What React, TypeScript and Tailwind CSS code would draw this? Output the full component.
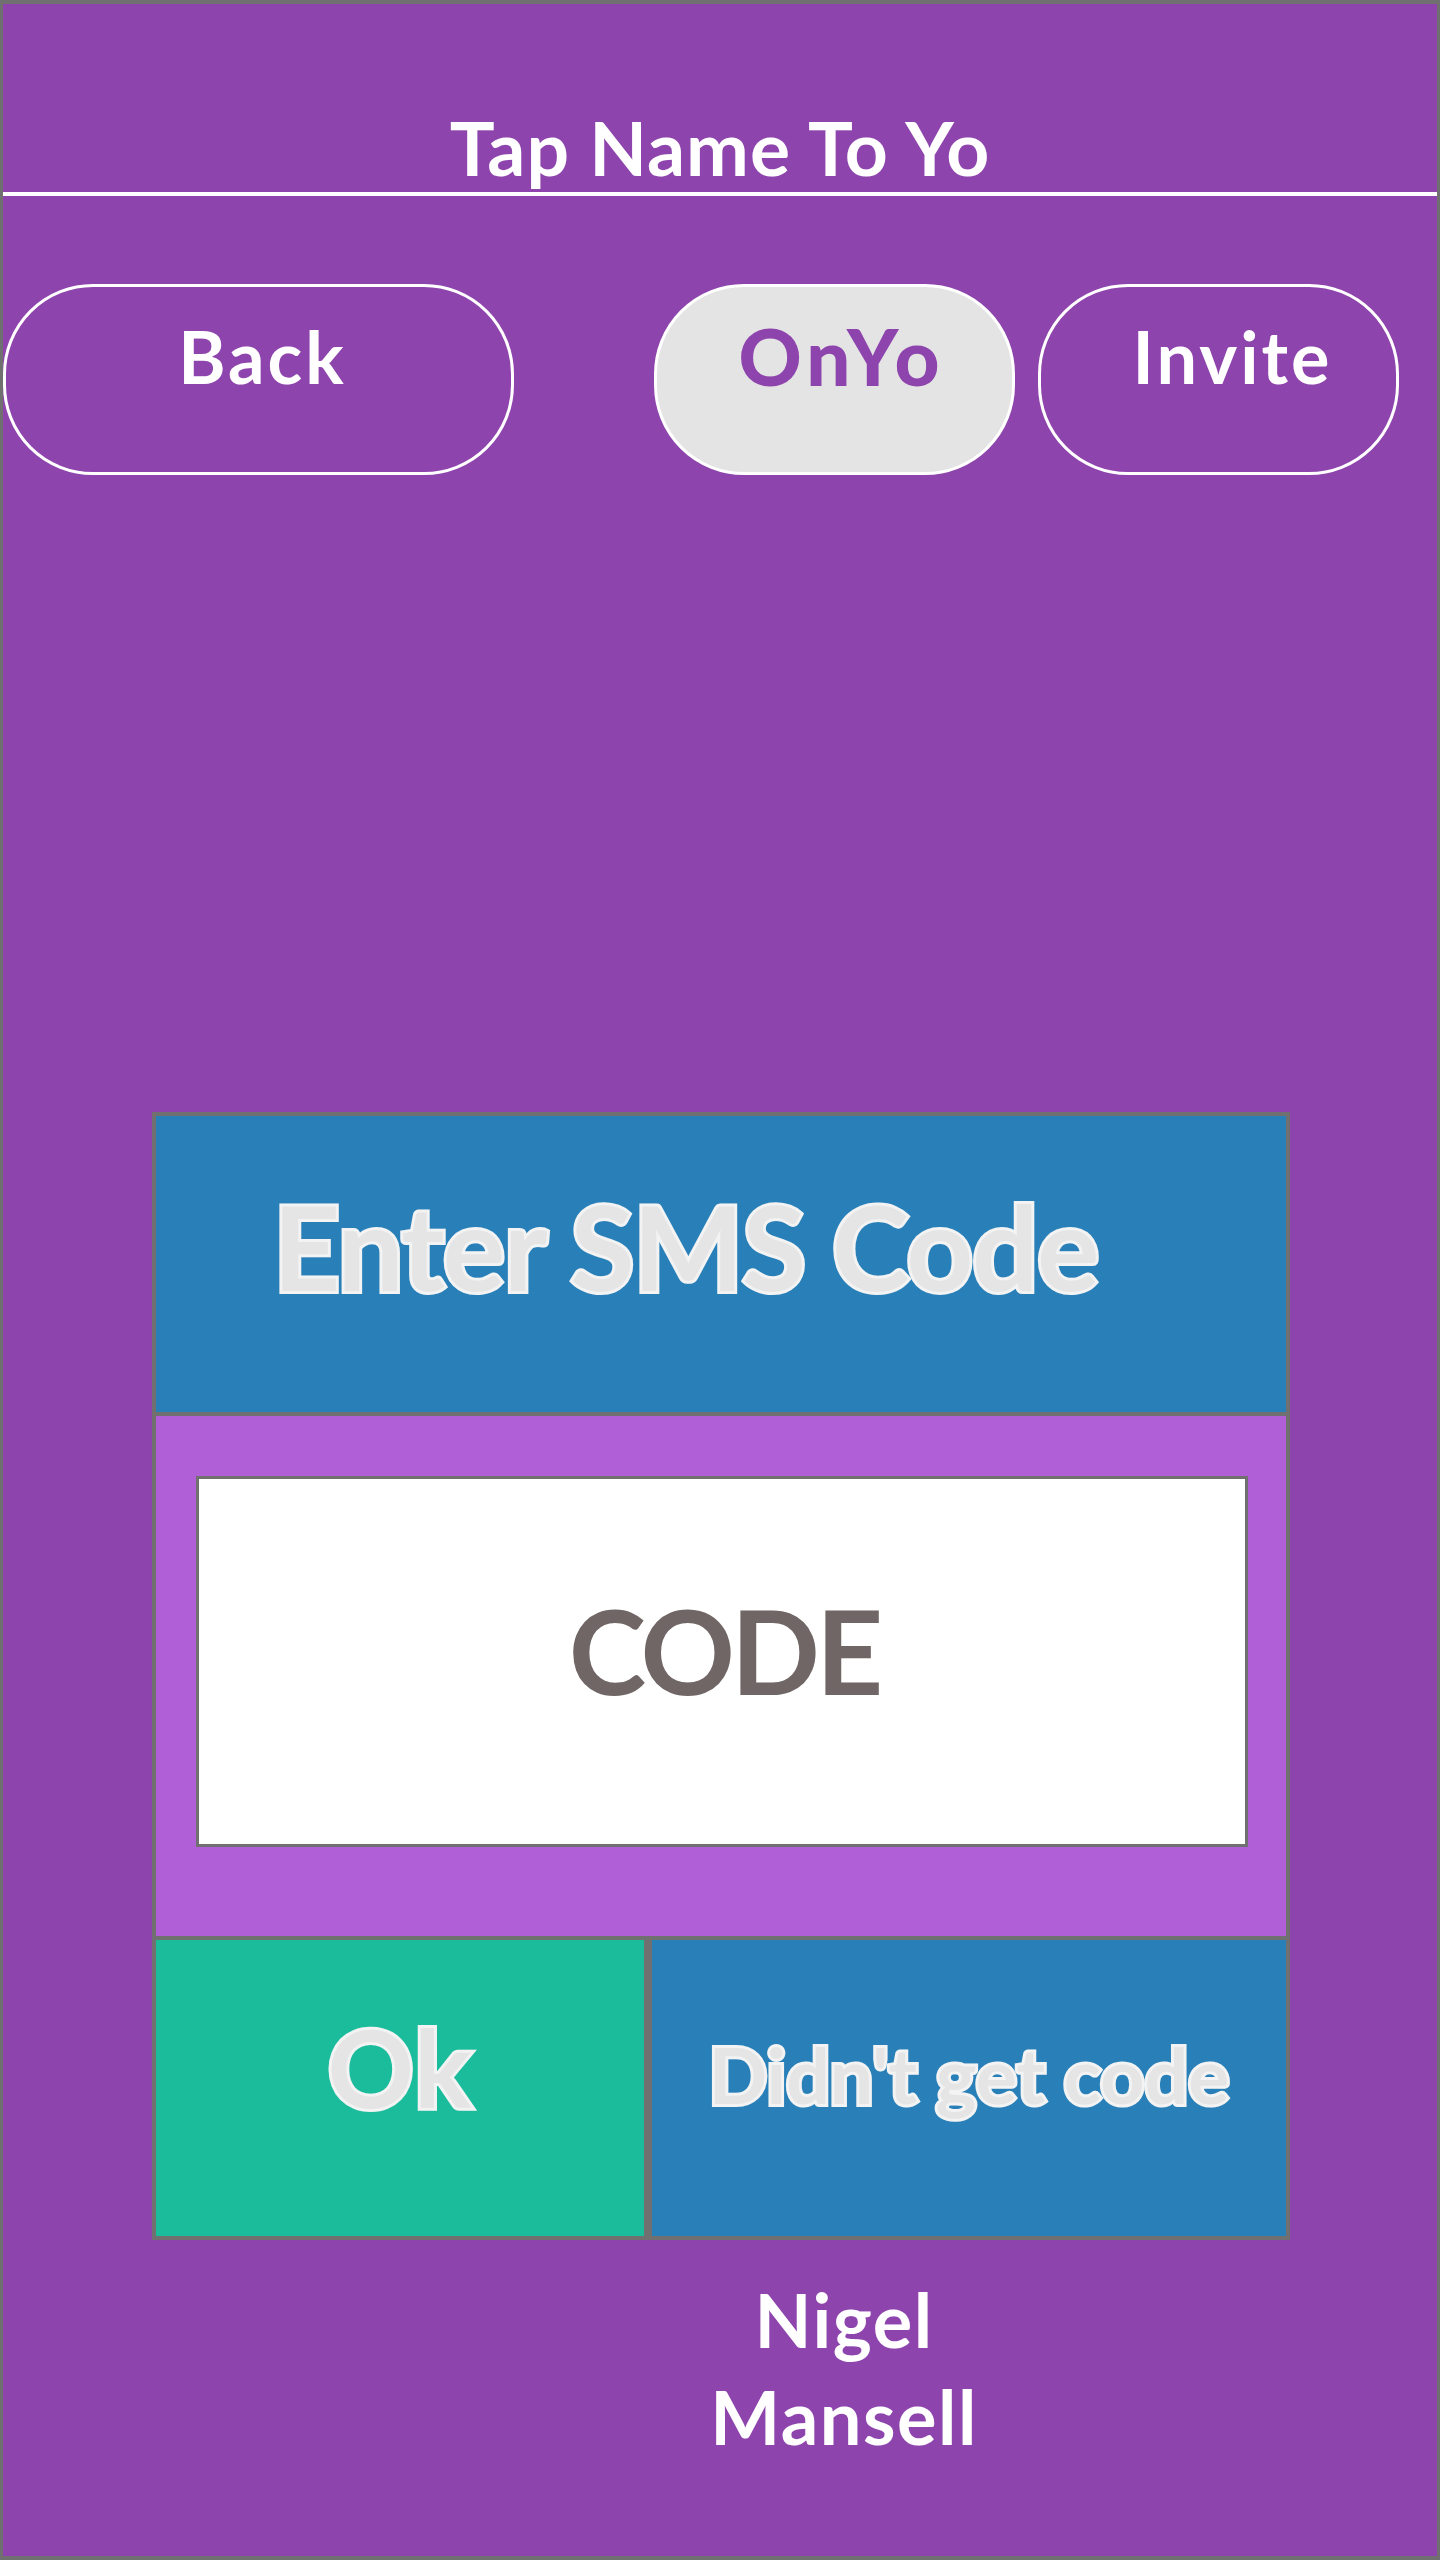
export default function App() {
  const font = { fontFamily: "Lato, 'Open Sans', sans-serif" };
  const outlined =
    "text-[#e5e5e5] [paint-order:stroke_fill] [-webkit-text-stroke:6px_#f3f3f3]";

  return (
    <div
      className="w-[1440px] h-[2560px] border-x-[3px] border-y-4 border-[#707070] bg-[#8e44ad] font-bold"
      style={font}
    >
      {/* Title */}
      <div className="pt-[106px] text-center text-[75px] leading-none tracking-[1px] text-white">
        Tap Name To Yo
      </div>
      <div className="mt-[7px] h-[4px] bg-white" />

      {/* Top buttons */}
      <div className="mt-[88px] flex">
        <button className="flex h-[191px] w-[511px] items-start justify-center rounded-[90px] border-[3px] border-white pt-[33px] pl-[8px] text-[72px] leading-none tracking-[3px] text-white">
          Back
        </button>
        <button className="ml-[140px] flex h-[191px] w-[361px] items-start justify-center rounded-[90px] border-[3px] border-white bg-[#e4e4e4] pt-[30px] pl-[14px] text-[78px] font-black leading-none tracking-[5px] text-[#8e44ad]">
          OnYo
        </button>
        <button className="ml-[23px] flex h-[191px] w-[361px] items-start justify-center rounded-[90px] border-[3px] border-white pt-[33px] pl-[28px] text-[72px] leading-none tracking-[3px] text-white">
          Invite
        </button>
      </div>

      {/* SMS dialog */}
      <div className="mt-[637px] ml-[149px] w-[1138px] border-4 border-[#707070]">
        <div className={`h-[300px] border-b-4 border-[#707070] bg-[#2980b9] pt-[72px] pl-[117px] text-[117px] leading-none tracking-[-1.5px] ${outlined}`}>
          Enter SMS Code
        </div>
        <div className="h-[520px] bg-[#b05fd6] pt-[60px] pl-[40px]">
          <div className="h-[371px] w-[1052px] border-[3px] border-[#707070] bg-white pt-[113px] pl-[4px] text-center text-[117px] leading-none tracking-[-4px] text-[#706665]">
            CODE
          </div>
        </div>
        <div className="flex h-[300px] border-t-4 border-[#707070]">
          <div className={`w-[496px] border-r-[8px] border-[#707070] bg-[#1abc9c] pt-[73px] text-center text-[107px] leading-none tracking-[1px] ${outlined}`}>
            Ok
          </div>
          <div className={`flex-1 bg-[#2980b9] pt-[96px] text-center text-[77px] leading-none ${outlined}`}>
            Didn't get code
          </div>
        </div>
      </div>

      {/* Name */}
      <div className="mt-[31px] pl-[248px] text-center text-[74px] leading-[97px] tracking-[1.5px] text-white">
        Nigel
        <br />
        Mansell
      </div>
    </div>
  );
}
